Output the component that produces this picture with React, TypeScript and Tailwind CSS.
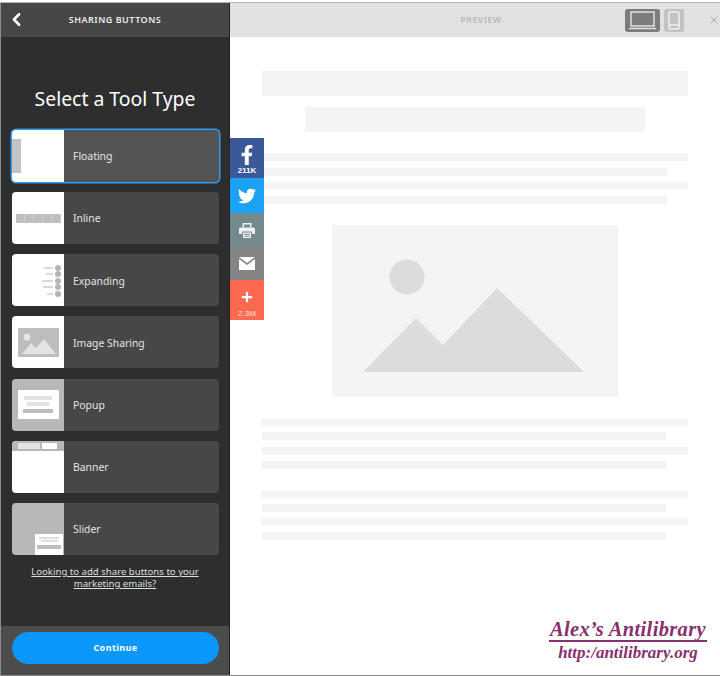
import { FaFacebookF, FaTwitter, FaPlus } from 'react-icons/fa'
import { ChevronLeft, X } from 'lucide-react'
import type { ReactNode } from 'react'

const font = '[font-family:"Noto_Sans",sans-serif]'

const Thumb = ({ type }: { type: string }) => {
  if (type === 'floating') {
    return (
      <div className="flex h-full w-full items-center bg-white">
        <div className="h-[34px] w-[9px] bg-[#c4c4c4]" />
      </div>
    )
  }
  if (type === 'inline') {
    return (
      <div className="flex h-full w-full items-center justify-center bg-white">
        {[0, 1, 2, 3, 4].map((i) => (
          <div key={i} className="h-[9px] w-[9px] border-r border-[#cfcfcf] bg-[#bfbfbf]" />
        ))}
      </div>
    )
  }
  if (type === 'expanding') {
    return (
      <div className="flex h-full w-full flex-col items-end justify-center gap-[0.5px] bg-white pr-[3px] pt-[1px]">
        {[9, 7, 11, 10, 6].map((w, i) => (
          <div key={i} className="flex items-center gap-[2px]">
            <div className="h-[2px] bg-[#dadada]" style={{ width: w }} />
            <div className="h-[6px] w-[6px] rounded-full bg-[#b5b5b5]" />
          </div>
        ))}
      </div>
    )
  }
  if (type === 'image') {
    return (
      <div className="flex h-full w-full items-center justify-center bg-white">
        <svg width="41" height="29" viewBox="0 0 41 29">
          <rect width="41" height="29" fill="#bdbdbd" />
          <circle cx="9" cy="9" r="3.5" fill="#e3e3e3" />
          <path d="M4 26 L13 15 L18 20 L26 11 L38 26 Z" fill="#e3e3e3" />
        </svg>
      </div>
    )
  }
  if (type === 'popup') {
    return (
      <div className="flex h-full w-full items-center justify-center bg-[#b8b8b8]">
        <div className="flex h-[29px] w-[41px] flex-col items-center gap-[2px] bg-white pt-[6px]">
          <div className="h-[4px] w-[28px] bg-[#e3e3e3]" />
          <div className="h-[4px] w-[22px] bg-[#e3e3e3]" />
          <div className="mt-px h-[4px] w-[30px] bg-[#bdbdbd]" />
        </div>
      </div>
    )
  }
  if (type === 'banner') {
    return (
      <div className="flex h-full w-full flex-col bg-white">
        <div className="flex h-[10px] items-center gap-[2px] bg-[#b8b8b8] px-[6px]">
          <div className="h-[6px] w-[22px] bg-[#e3e3e3]" />
          <div className="h-[6px] w-[15px] bg-white" />
        </div>
      </div>
    )
  }
  return (
    <div className="flex h-full w-full items-end justify-end bg-[#b8b8b8] pr-px">
      <div className="flex h-[21px] w-[28px] flex-col items-center gap-[1px] bg-white pt-[3px]">
        <div className="h-[2px] w-[20px] bg-[#dedede]" />
        <div className="h-[2px] w-[17px] bg-[#dedede]" />
        <div className="mt-[2px] h-[4px] w-[24px] bg-[#bdbdbd]" />
      </div>
    </div>
  )
}

const tools = [
  { type: 'floating', label: 'Floating' },
  { type: 'inline', label: 'Inline' },
  { type: 'expanding', label: 'Expanding' },
  { type: 'image', label: 'Image Sharing' },
  { type: 'popup', label: 'Popup' },
  { type: 'banner', label: 'Banner' },
  { type: 'slider', label: 'Slider' },
]

const ToolCard = ({ type, label }: { type: string; label: string }) => {
  const selected = type === 'floating'
  return (
    <div
      className={
        selected
          ? 'flex h-[52px] items-center overflow-hidden rounded-[4px] bg-[#545454] ring-[1.5px] ring-[#2d9cf0]'
          : 'flex h-[52px] items-center overflow-hidden rounded-[4px] bg-[#474747]'
      }
    >
      <div className="h-full w-[52px] shrink-0">
        <Thumb type={type} />
      </div>
      <span className="pl-[9px] pt-[2px] text-[10.4px] text-[#e4e4e4]">{label}</span>
    </div>
  )
}

const SocialBtn = ({ bg, h, children }: { bg: string; h: string; children: ReactNode }) => (
  <div className={`flex w-full flex-col items-center ${bg} ${h}`}>{children}</div>
)

const Bar = ({ w, h = 'h-2', mt }: { w: string; h?: string; mt: string }) => (
  <div className={`${w} ${h} ${mt} shrink-0 bg-[#f4f4f4]`} />
)

const App = () => {
  return (
    <div className={`relative flex h-[676px] w-[720px] flex-col overflow-hidden bg-white pt-[2px] ${font}`}>
      <div className="h-px bg-[#b5b5b5]" />
      <div className="flex min-h-0 flex-1 border-b border-[#8c8c8c]">
        <aside className="flex w-[230px] shrink-0 flex-col border-x border-l-[#8c8c8c] border-r-[#222] bg-[#2e2e2e]">
          <div className="relative flex h-[34px] shrink-0 items-center justify-center bg-[#474747]">
            <ChevronLeft className="absolute left-[5px] top-[6px] h-[21px] w-[21px] text-white" strokeWidth={3} />
            <span className="text-[9px] font-semibold tracking-[0.5px] text-[#ececec]">SHARING BUTTONS</span>
          </div>
          <h1 className="mt-[48px] text-center text-[19.4px] leading-[28px] text-white">Select a Tool Type</h1>
          <div className="ml-[11px] mr-[10px] mt-[17px] flex flex-col gap-[10.17px]">
            {tools.map((t) => (
              <ToolCard key={t.type} type={t.type} label={t.label} />
            ))}
          </div>
          <p className="mx-auto mt-[11px] w-[190px] text-center text-[9.6px] leading-[12px] text-[#dedede] underline">
            Looking to add share buttons to your marketing emails?
          </p>
          <div className="mt-auto flex h-[49px] items-start bg-[#4c4c4c] pl-[11px] pr-[10px] pt-[6px]">
            <button className="h-[32px] w-full rounded-full bg-[#0b97fb] text-[9px] font-bold tracking-[0.4px] text-white">
              Continue
            </button>
          </div>
        </aside>
        <main className="flex min-w-0 flex-1 flex-col">
          <div className="relative flex h-[34px] shrink-0 items-center justify-center bg-[#e1e1e1] pl-[12px]">
            <span className="text-[8.5px] font-semibold tracking-[0.6px] text-[#b8b8b8]">PREVIEW</span>
            <div className="absolute right-[36px] top-[6px] flex items-center gap-[4px]">
              <div className="flex h-[23px] w-[35px] items-center justify-center rounded-[3px] bg-[#7c7c7c]">
                <svg width="29" height="19" viewBox="0 0 29 19" fill="none" stroke="#e6e6e6" strokeWidth="1.4">
                  <rect x="3" y="1" width="23" height="14" />
                  <path d="M1 17.5 H28" />
                </svg>
              </div>
              <div className="flex h-[23px] w-[20px] items-center justify-center rounded-[3px] bg-[#c2c2c2]">
                <svg width="12" height="19" viewBox="0 0 12 19" fill="none" stroke="#f2f2f2" strokeWidth="1.4">
                  <rect x="1" y="1" width="10" height="17" rx="1" />
                  <path d="M1 14 H11" />
                </svg>
              </div>
            </div>
            <X className="absolute right-0 top-[11px] h-[12px] w-[12px] text-[#a6a6a6]" strokeWidth={2} />
          </div>
          <div className="flex flex-col items-center">
            <Bar w="w-[426px]" h="h-[25px]" mt="mt-[34px]" />
            <Bar w="w-[340px]" h="h-[25px]" mt="mt-[11px]" />
            <Bar w="w-[426px]" mt="mt-[21px]" />
            <div className="w-[426px]">
              <Bar w="w-[405px]" mt="mt-[7px]" />
            </div>
            <Bar w="w-[426px]" mt="mt-[6px]" />
            <div className="w-[426px]">
              <Bar w="w-[405px]" mt="mt-[6px]" />
            </div>
            <div className="mt-[21px] h-[172px] w-[286px] bg-[#f4f4f4]">
              <svg width="286" height="172" viewBox="0 0 286 172">
                <circle cx="75" cy="52" r="17.5" fill="#dcdcdc" />
                <path d="M31 147 L84 93 L111 120 L165 63 L252 147 Z" fill="#dcdcdc" />
              </svg>
            </div>
            <Bar w="w-[426px]" mt="mt-[21px]" />
            <div className="w-[426px]">
              <Bar w="w-[404px]" mt="mt-[6px]" />
            </div>
            <Bar w="w-[426px]" mt="mt-[7px]" />
            <div className="w-[426px]">
              <Bar w="w-[404px]" mt="mt-[6px]" />
            </div>
            <Bar w="w-[426px]" mt="mt-[21px]" />
            <div className="w-[426px]">
              <Bar w="w-[404px]" mt="mt-[6px]" />
            </div>
            <Bar w="w-[426px]" mt="mt-[6px]" />
            <div className="w-[426px]">
              <Bar w="w-[404px]" mt="mt-[6px]" />
            </div>
          </div>
        </main>
      </div>

      <div className="absolute left-[230px] top-[138px] flex w-[34px] flex-col [font-family:'Liberation_Sans',sans-serif]">
        <SocialBtn bg="bg-[#3b5998]" h="h-[40px]">
          <FaFacebookF className="mt-[7px] h-[20px] w-[20px] text-white" />
          <span className="mt-[1px] text-[8px] leading-[9px] font-bold text-white">211K</span>
        </SocialBtn>
        <SocialBtn bg="bg-[#1da1f2] justify-center" h="h-[35px]">
          <FaTwitter className="h-[18px] w-[18px] text-white" />
        </SocialBtn>
        <SocialBtn bg="bg-[#738a8d] justify-center" h="h-[34px]">
          <svg width="16" height="15" viewBox="0 0 16 15" fill="#eef2f2">
            <path d="M3.5 0 H12.5 V4 H11 V1.5 H5 V4 H3.5 Z" />
            <path d="M1.5 4.5 H14.5 Q16 4.5 16 6 V11 H13 V8.5 H3 V11 H0 V6 Q0 4.5 1.5 4.5 Z" />
            <path d="M4 9.5 H12 V15 H4 Z M5.2 10.8 V11.8 H10.8 V10.8 Z M5.2 12.8 V13.8 H10.8 V12.8 Z" fillRule="evenodd" />
          </svg>
        </SocialBtn>
        <SocialBtn bg="bg-[#848484] justify-center" h="h-[33px]">
          <svg width="16" height="13" viewBox="0 0 16 13">
            <path d="M0 0 H16 L8 6 Z M0 2 L8 8 L16 2 V13 H0 Z" fill="#fff" />
          </svg>
        </SocialBtn>
        <SocialBtn bg="bg-[#fb6950]" h="h-[40px]">
          <FaPlus className="mt-[11px] h-[12px] w-[12px] text-white" />
          <span className="mt-[6px] text-[8px] leading-[9px] text-[#ffe3dc]">2.3M</span>
        </SocialBtn>
      </div>

      <div className="absolute right-[13px] top-[618px] flex flex-col items-center font-bold italic text-[#8a2f6e] [font-family:'Liberation_Serif',serif]">
        <span className="border-b-2 border-[#8a2f6e] px-[1px] text-[20.5px] leading-[22px] tracking-[0.35px]">Alex’s Antilibrary</span>
        <span className="text-[17px] leading-[21px]">http:/antilibrary.org</span>
      </div>
    </div>
  )
}

export default App
